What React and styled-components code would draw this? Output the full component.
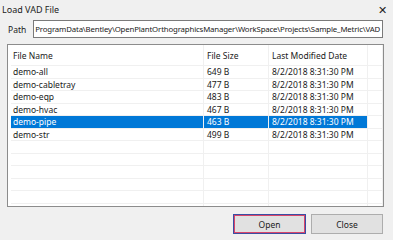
import React from 'react'
import styled, { createGlobalStyle } from 'styled-components'

const GlobalStyle = createGlobalStyle`
    body {
        margin: 0;
        font-family: "Noto Sans", "Open Sans", sans-serif;
        font-size: 8.5px;
        color: #1a1a1a;
    }
`

const Dialog = styled.div`
    width: 393px;
    height: 240px;
    background: #f0f0f0;
    display: flex;
    flex-direction: column;
    overflow: hidden;
    box-sizing: border-box;
`

const TitleBar = styled.div`
    height: 19px;
    display: flex;
    align-items: center;
    justify-content: space-between;
    padding: 0 6px 0 2px;
`

const Title = styled.span`
    font-size: 9px;
    color: #222;
`

const CloseX = styled.span`
    font-size: 11px;
    line-height: 1;
    color: #222;
`

const PathRow = styled.div`
    display: flex;
    align-items: center;
    gap: 7px;
    margin: 1px 10px 0 8px;
`

// path text is set tighter than the list in the original dialog
const PathBox = styled.div`
    flex: 1;
    height: 18px;
    line-height: 16px;
    box-sizing: border-box;
    border: 1px solid #7a7a7a;
    background: #fff;
    padding-left: 1px;
    font-size: 7.8px;
    letter-spacing: -0.15px;
    white-space: nowrap;
    overflow: hidden;
`

const ListBox = styled.div`
    margin: 6px 9px 0 7px;
    height: 163px;
    box-sizing: border-box;
    border: 1px solid #8c8c8c;
    background: #fff;
    padding-left: 3px;
    overflow: hidden;
`

// col widths match the grid lines in the screenshot
const Row = styled.div`
    display: grid;
    grid-template-columns: 193px 65px 99px 1fr;
    height: ${p => p.$h || 12.5}px;
    box-sizing: border-box;
    border-bottom: 1px solid #f0f0f0;
    align-items: center;
`

const Cell = styled.div`
    height: 100%;
    display: flex;
    align-items: center;
    padding-left: ${p => p.$first ? 2 : 3}px;
    border-right: 1px solid #f0f0f0;
    white-space: nowrap;
    background: ${p => p.$sel ? '#0078d7' : 'transparent'};
    color: ${p => p.$sel ? '#fff' : 'inherit'};
`

const ButtonRow = styled.div`
    display: flex;
    justify-content: flex-end;
    gap: 5px;
    margin: 7px 10px 0 0;
`

const Button = styled.button`
    width: ${p => p.$w}px;
    height: 20px;
    box-sizing: border-box;
    background: #e1e1e1;
    border: 1px solid ${p => p.$focus ? '#3b4ea3' : '#adadad'};
    box-shadow: ${p => p.$focus ? 'inset 0 0 0 1px #d9466a' : 'none'};
    font-family: inherit;
    font-size: 8.5px;
    color: #1a1a1a;
    padding: 0;
`

const files = [
    { name: 'demo-all', size: '649 B' },
    { name: 'demo-cabletray', size: '477 B' },
    { name: 'demo-eqp', size: '483 B' },
    { name: 'demo-hvac', size: '467 B' },
    { name: 'demo-pipe', size: '463 B', selected: true },
    { name: 'demo-str', size: '499 B' },
]

const App = () => {
    return <Dialog>
        <GlobalStyle />
        <TitleBar>
            <Title>Load VAD File</Title>
            <CloseX>✕</CloseX>
        </TitleBar>
        <PathRow>
            <span>Path</span>
            <PathBox>ProgramData\Bentley\OpenPlantOrthographicsManager\WorkSpace\Projects\Sample_Metric\VAD</PathBox>
        </PathRow>
        <ListBox>
            <Row $h={21}>
                <Cell $first>File Name</Cell>
                <Cell>File Size</Cell>
                <Cell>Last Modified Date</Cell>
                <Cell />
            </Row>
            {files.map(f => (
                <Row key={f.name}>
                    <Cell $first $sel={f.selected}>{f.name}</Cell>
                    <Cell $sel={f.selected}>{f.size}</Cell>
                    <Cell $sel={f.selected}>8/2/2018 8:31:30 PM</Cell>
                    <Cell />
                </Row>
            ))}
            {[0, 1, 2, 3, 4, 5].map(i => (
                <Row key={'e' + i}>
                    <Cell $first /><Cell /><Cell /><Cell />
                </Row>
            ))}
        </ListBox>
        <ButtonRow>
            <Button $w={73} $focus>Open</Button>
            <Button $w={72}>Close</Button>
        </ButtonRow>
    </Dialog>
}

export default App
